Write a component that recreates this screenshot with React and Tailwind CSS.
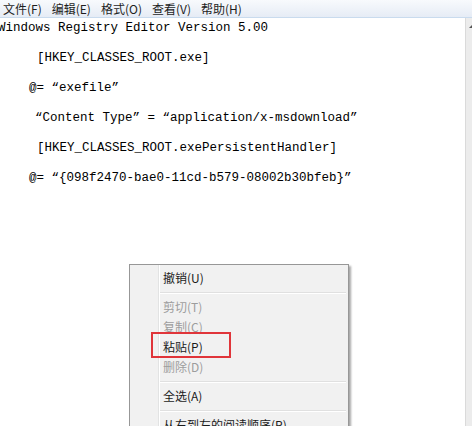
const lines = [
  { text: "Windows Registry Editor Version 5.00", pl: "pl-0 -ml-[2px]" },
  { text: "[HKEY_CLASSES_ROOT.exe]", pl: "pl-[37px]" },
  { text: "@= “exefile”", pl: "pl-[29px]" },
  { text: "“Content Type” = “application/x-msdownload”", pl: "pl-[35px]" },
  { text: "[HKEY_CLASSES_ROOT.exePersistentHandler]", pl: "pl-[37px]" },
  { text: "@= “{098f2470-bae0-11cd-b579-08002b30bfeb}”", pl: "pl-[29px]" },
];

const menuBar = ["文件(F)", "编辑(E)", "格式(O)", "查看(V)", "帮助(H)"];

function Item({ children, disabled }) {
  return (
    <div
      className={
        "flex h-[20px] items-center pl-[33px] text-[12px] " +
        (disabled ? "text-[#9d9d9d]" : "text-[#1b1b1b]")
      }
    >
      {children}
    </div>
  );
}

function Sep() {
  return (
    <div className="h-[9px] pl-[30px] pr-[2px] pt-[4px]">
      <div className="h-px bg-[#e0e0e0]" />
      <div className="h-px bg-white" />
    </div>
  );
}

export default function App() {
  return (
    <div className="relative h-[426px] w-[472px] overflow-hidden bg-white">
      <div className="flex h-[18px] items-center gap-[10px] border-b border-[#c9dbee] bg-gradient-to-b from-[#f8fafd] to-[#e6ecf5] pl-[3px] font-['Noto_Sans_CJK_SC',sans-serif] text-[12px] text-[#1e1e1e]">
        {menuBar.map((m) => (
          <span key={m}>{m}</span>
        ))}
      </div>

      <div className="flex h-[408px]">
        <div className="flex flex-1 flex-col gap-[10px] overflow-hidden font-['Liberation_Mono','Noto_Sans_CJK_SC',monospace] text-[12.5px] leading-[20px] text-black">
          {lines.map((l, i) => (
            <div key={i} className={"whitespace-pre " + l.pl}>
              {l.text}
            </div>
          ))}
        </div>
        <div className="w-[7px] border-l border-[#dadada] bg-[#ececec] pt-[6px] pl-[3px]">
          <svg width="5" height="4" viewBox="0 0 5 4">
            <path d="M0 4 L4 0 L4 4 Z" fill="#555" />
          </svg>
        </div>
      </div>

      {/* context menu */}
      <div className="absolute left-[129px] top-[264px] w-[220px] border border-[#979797] bg-[#f1f1f1] pt-[3px] font-['Noto_Sans_CJK_SC',sans-serif] shadow-[2px_2px_2px_rgba(0,0,0,0.35)]">
        <div className="absolute bottom-0 left-[28px] top-0 w-px bg-[#e2e3e3]" />
        <div className="absolute bottom-0 left-[29px] top-0 w-px bg-white" />
        <div className="relative">
          <Item>撤销(U)</Item>
          <Sep />
          <Item disabled>剪切(T)</Item>
          <Item disabled>复制(C)</Item>
          <Item>粘贴(P)</Item>
          <Item disabled>删除(D)</Item>
          <Sep />
          <Item>全选(A)</Item>
          <Sep />
          <Item>从右到左的阅读顺序(R)</Item>
          <Item>显示 Unicode 控制字符(S)</Item>
        </div>
        <div className="absolute left-[21px] top-[67px] h-[26px] w-[80px] border-2 border-[#e0353a]" />
      </div>
    </div>
  );
}
